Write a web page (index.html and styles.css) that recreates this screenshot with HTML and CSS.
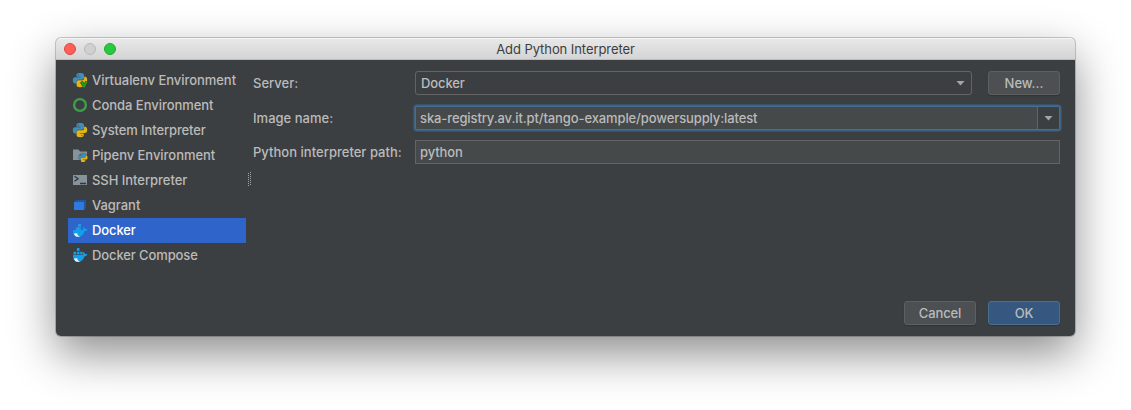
FILE: index.html
```html
<!DOCTYPE html>
<html lang="en">
<head>
<meta charset="utf-8">
<title>Add Python Interpreter</title>
<link rel="stylesheet" href="styles.css">
</head>
<body>
<svg width="0" height="0" class="defs">
  <defs>
    <g id="python">
      <path fill="#3f8fb8" d="M8 1C5.300 1 4.500 1.600 4.500 2.900V4.700h4v.5H3C1.600 5.200.8 6.400.8 8.200s.8 3.300 2 3.300h1.700V9.700C4.500 8.200 5.300 7.700 6.500 7.700h3.500c1.100 0 2-.8 2-1.900V2.900C12 1.600 10.500 1 8 1z"/>
      <path fill="#e3b516" d="M8 15.200c2.700 0 3.700-.7 3.700-2v-1.800H7.800v-.5H13c1.400 0 2.200-1.200 2.200-3s-.8-3.200-2-3.200h-1v1.500c0 1.300-1 2.100-2.200 2.100H6.500c-1.100 0-1.900.8-1.900 1.800v3.100c0 1.300 1 2 3.400 2z"/>
      <circle cx="6.300" cy="3" r=".5" fill="#3c3f41"/><circle cx="9.900" cy="13.200" r=".5" fill="#3c3f41"/>
    </g>
    <g id="whale">
      <path fill="#119eea" d="M1 8h10.200c-.5-1.100-.3-2.200.5-3.100.9.600 1.300 1.400 1.300 2.200.9-.2 1.700-.1 2.400.3-.5 1.200-1.400 1.800-2.900 1.800C11.500 13 9 15 6 15 2.800 15 1 12 1 8z"/>
      <path fill="#e6f5ff" d="M1.500 11.200c1.200.5 2.600.3 3.600-.2.200 1.600 1.300 2.900 2.900 3.600-3.200.8-5.400-.4-6.500-3.400z"/>
    </g>
  </defs>
</svg>
<main class="window">
  <header class="titlebar">
    <div class="lights"><i class="light red"></i><i class="light gray"></i><i class="light green"></i></div>
    <h1 class="title">Add Python Interpreter</h1>
  </header>
  <div class="content">
    <ul class="sidebar">
      <li class="item"><svg class="icon" viewBox="0 0 16 16"><use href="#python"/><path d="M9.500 9.500l2.600 5 2.600-5" fill="none" stroke="#3c3f41" stroke-width="2.800"/><path d="M9.500 9.500l2.600 5 2.600-5" fill="none" stroke="#22a60d" stroke-width="1.700"/></svg><span>Virtualenv Environment</span></li>
      <li class="item"><svg class="icon" viewBox="0 0 16 16"><circle cx="8" cy="8" r="5.900" fill="none" stroke="#3f9f49" stroke-width="2.400"/></svg><span>Conda Environment</span></li>
      <li class="item"><svg class="icon" viewBox="0 0 16 16"><use href="#python"/></svg><span class="tight">System Interpreter</span></li>
      <li class="item"><svg class="icon" viewBox="0 0 16 16"><path fill="#87939a" d="M1 2.500h5.500l1.500 2h7v8.500H1z"/><circle cx="11" cy="10.500" r="4.700" fill="#3c3f41" opacity=".6"/><use href="#python" transform="translate(6 5.500) scale(.63)"/></svg><span>Pipenv Environment</span></li>
      <li class="item"><svg class="icon" viewBox="0 0 16 16"><path fill="#87939a" d="M1 3h14v10H1z"/><path d="M2.500 4.300l3.600 2.500-3.600 2.500M8 11.500h6" fill="none" stroke="#30373b" stroke-width="1.300"/></svg><span>SSH Interpreter</span></li>
      <li class="item"><svg class="icon" viewBox="0 0 16 16"><path fill="#2158a6" d="M2 5l2-2h10v8l-2 2z"/><path fill="#3279df" d="M2 5h10v8H2z"/></svg><span>Vagrant</span></li>
      <li class="item selected"><svg class="icon" viewBox="0 0 16 16"><path fill="#2795e0" d="M4 5.200h4.800V8H4zM6 2h3v2.700H6z"/><use href="#whale"/></svg><span class="tight">Docker</span></li>
      <li class="item"><svg class="icon" viewBox="0 0 16 16"><path fill="#119eea" d="M1.500 4.800h2.700v2.600H1.500zM4.900 4.800h2.600v2.600H4.900zM8.200 4.800h2.500v2.600H8.200zM4.900 1h2.600v2.900H4.900z"/><use href="#whale"/></svg><span class="tight">Docker Compose</span></li>
    </ul>
    <svg class="grip" viewBox="0 0 4 16"><path d="M.5 2v14M2.500 1v14" stroke="#a4a6a7" stroke-width="1" stroke-dasharray="1 1"/></svg>
    <section class="main">
      <div class="form">
        <label class="label">Server:</label>
        <div class="server"><div class="combo"><span class="tight">Docker</span><i class="arrow"></i></div><button class="button">New...</button></div>
        <label class="label">Image name:</label>
        <div class="field focused"><span class="tight">ska-registry.av.it.pt/tango-example/powersupply:latest</span><div class="drop"><i class="arrow"></i></div></div>
        <label class="label">Python interpreter path:</label>
        <div class="field"><span class="tight">python</span></div>
      </div>
      <footer class="actions"><button class="button tight">Cancel</button><button class="button primary tight">OK</button></footer>
    </section>
  </div>
</main>
</body>
</html>
```
FILE: styles.css
```css
* { box-sizing: border-box; }
body {
  margin: 0;
  padding: 38px 56px 0;
  height: 410px;
  overflow: hidden;
  background: #fff;
  font: 500 13px/16px Inter, "Liberation Sans", sans-serif;
  letter-spacing: 0;
  color: #bbb;
}
.defs { position: absolute; }
.window {
  width: 1019px;
  height: 298px;
  border-radius: 5px;
  background: #3c3f41;
  box-shadow: 0 0 0 1px rgba(0,0,0,.2), 0 18px 46px rgba(0,0,0,.45);
}
.titlebar {
  display: grid;
  grid-template-columns: 1fr auto 1fr;
  align-items: center;
  height: 22px;
  padding: 0 8px;
  border-radius: 5px 5px 0 0;
  background: linear-gradient(#e9e9e9, #d3d3d3);
  box-shadow: inset 0 1px #f6f6f6, inset 0 -1px #bdbdbd;
}
.lights { display: flex; gap: 8px; }
.light { width: 12px; height: 12px; border-radius: 50%; border: 1px solid; }
.red { background: #ff5f57; border-color: #e2463f; }
.gray { background: #d0d0d0; border-color: #b9b9b9; }
.green { background: #28c940; border-color: #1dad2b; }
.title { margin: 0; font-size: 13px; font-weight: 400; color: #3d3d3d; white-space: nowrap; letter-spacing: -.07px; }
.content { display: flex; height: 276px; padding: 8px 15px 11px 12px; }
.sidebar { width: 178px; margin: 0; padding: 0; list-style: none; }
.item { display: flex; align-items: center; gap: 4px; height: 25px; padding-left: 4px; padding-bottom: 1px; white-space: nowrap; letter-spacing: -.04px; }
.selected { background: #2f65ca; color: #fff; }
.icon { width: 16px; height: 16px; flex: none; }
.grip { width: 4px; height: 16px; margin: 103px 0 0 2px; flex: none; }
.main { display: flex; flex-direction: column; justify-content: space-between; width: 807px; margin-left: 1px; padding-top: 3px; }
.form { display: grid; grid-template-columns: 162px 645px; row-gap: 10px; }
.label { display: flex; align-items: center; height: 24px; white-space: nowrap; letter-spacing: .02px; }
.tight { letter-spacing: -.11px; }
.server { display: flex; gap: 16px; height: 25px; }
.combo { display: flex; align-items: center; justify-content: space-between; width: 557px; height: 24px; padding: 0 6px 0 5px; border: 1px solid #646464; border-radius: 3px; }
.arrow { width: 9px; height: 5px; background: #a3a6a8; clip-path: polygon(0 0, 100% 0, 50% 100%); }
.button {
  width: 72px;
  height: 24px;
  padding: 0;
  border: 1px solid #5e6060;
  border-radius: 3px;
  background: #4c5052;
  box-shadow: 0 1px 1px rgba(0,0,0,.2);
  color: #bbb;
  font: inherit;
}
.primary { background: #365880; border-color: #4c708c; }
.field { display: flex; align-items: center; justify-content: space-between; height: 24px; padding-left: 4px; border: 1px solid #646464; background: #45494a; white-space: nowrap; }
.focused { border-color: #466d94; border-radius: 2px; box-shadow: 0 0 0 1.500px #3d6185; }
.drop { display: flex; align-items: center; justify-content: center; width: 22px; height: 100%; border-left: 1px solid #646464; background: #3c3f41; }
.actions { display: flex; justify-content: flex-end; gap: 12px; }
```
